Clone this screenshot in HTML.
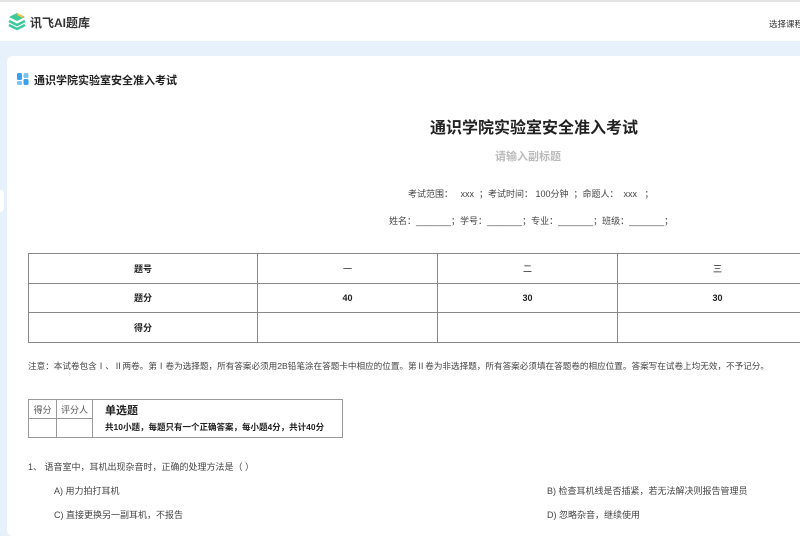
<!DOCTYPE html>
<html><head><meta charset="utf-8"><style>
*{margin:0;padding:0;box-sizing:border-box}
body{width:800px;height:533px;overflow:hidden;background:#e6f1fb;font-family:"Liberation Sans","Noto Sans CJK SC",sans-serif;color:#333;position:relative}
.top{position:absolute;left:0;top:0;width:800px;height:41px;background:#fff;border-top:2px solid #e4e4e4}
.logo{position:absolute;left:7px;top:11px}
.brand{position:absolute;left:30px;top:12px;font-size:12px;font-weight:bold;color:#333}
.sel{position:absolute;left:769px;top:16px;font-size:8.5px;color:#333;white-space:nowrap}
.card{position:absolute;left:7px;top:56px;width:800px;height:480px;background:#fff;border-radius:6px}
.a{position:absolute;white-space:nowrap}
table{border-collapse:collapse;position:absolute;left:28px;top:253px;width:790px}
td{border:1px solid #888;height:29.5px;text-align:center;font-size:9px;font-weight:bold;color:#222}
.t2 td{border:1px solid #999;height:19px;font-weight:normal;font-size:9px;color:#555}
</style></head><body>
<div class="top">
<svg class="logo" width="20" height="18" viewBox="0 0 20 18"><path d="M2 4 L10 0 L18 4 L10 8Z" fill="#3ec99a"/><path d="M10 1 L16 4" stroke="#f5c341" stroke-width="2"/><path d="M2 8 L10 12 L18 8" stroke="#3ec99a" stroke-width="2.5" fill="none"/><path d="M2 12 L10 16 L18 12" stroke="#3ec99a" stroke-width="2.5" fill="none"/></svg>
<div class="brand">讯飞AI题库</div>
<div class="sel">选择课程</div>
</div>
<div style="position:absolute;left:0;top:190px;width:4px;height:22px;background:#fff;border-radius:0 6px 6px 0"></div>
<div class="card">
<svg class="a" style="left:10px;top:17px" width="12" height="12"><rect x="0" y="0" width="5" height="7" rx="1.5" fill="#3aa0f0"/><rect x="6.5" y="0" width="5" height="5" rx="1.5" fill="#7cc4f7"/><rect x="0" y="8" width="5" height="4" rx="1.5" fill="#7cc4f7"/><rect x="6.5" y="6" width="5" height="6" rx="1.5" fill="#3aa0f0"/></svg>
<div class="a" style="left:27px;top:16px;font-size:11px;font-weight:bold;color:#222">通识学院实验室安全准入考试</div>
</div>
<div class="a" style="left:430px;top:114px;font-size:16px;font-weight:bold;color:#222">通识学院实验室安全准入考试</div>
<div class="a" style="left:495px;top:148px;font-size:11px;font-weight:bold;color:#bbb">请输入副标题</div>
<div class="a" style="left:408px;top:187px;font-size:9px;color:#444">考试范围：&nbsp;&nbsp;&nbsp;xxx &nbsp;；考试时间：&nbsp;100分钟 &nbsp;；命题人：&nbsp;&nbsp;xxx &nbsp;&nbsp;；</div>
<div class="a" style="left:389px;top:214px;font-size:9px;color:#444">姓名：_______；学号：_______；专业：_______；班级：_______；</div>
<table>
<tr><td style="width:229px">题号</td><td style="width:180px;font-weight:normal">一</td><td style="width:180px;font-weight:normal">二</td><td style="font-weight:normal">三</td></tr>
<tr><td>题分</td><td>40</td><td>30</td><td>30</td></tr>
<tr><td>得分</td><td></td><td></td><td></td></tr>
</table>
<div class="a" style="left:28px;top:360px;font-size:8.6px;color:#444">注意：本试卷包含Ⅰ、Ⅱ两卷。第Ⅰ卷为选择题，所有答案必须用2B铅笔涂在答题卡中相应的位置。第Ⅱ卷为非选择题，所有答案必须填在答题卷的相应位置。答案写在试卷上均无效，不予记分。</div>
<table class="t2" style="left:28px;top:399px;width:315px">
<tr><td style="width:28px">得分</td><td style="width:36px">评分人</td><td rowspan="2" style="text-align:left;padding-left:12px;color:#222"><div style="font-size:11px;font-weight:bold;line-height:16px">单选题</div><div style="font-size:8.5px;font-weight:bold;line-height:16px">共10小题，每题只有一个正确答案，每小题4分，共计40分</div></td></tr>
<tr><td></td><td></td></tr>
</table>
<div class="a" style="left:28px;top:460px;font-size:9px;color:#444">1、 语音室中，耳机出现杂音时，正确的处理方法是（ ）</div>
<div class="a" style="left:54px;top:484px;font-size:9px;color:#444">A) 用力拍打耳机</div>
<div class="a" style="left:54px;top:508px;font-size:9px;color:#444">C) 直接更换另一副耳机，不报告</div>
<div class="a" style="left:547px;top:484px;font-size:9px;color:#444">B) 检查耳机线是否插紧，若无法解决则报告管理员</div>
<div class="a" style="left:547px;top:508px;font-size:9px;color:#444">D) 忽略杂音，继续使用</div>
</body></html>
